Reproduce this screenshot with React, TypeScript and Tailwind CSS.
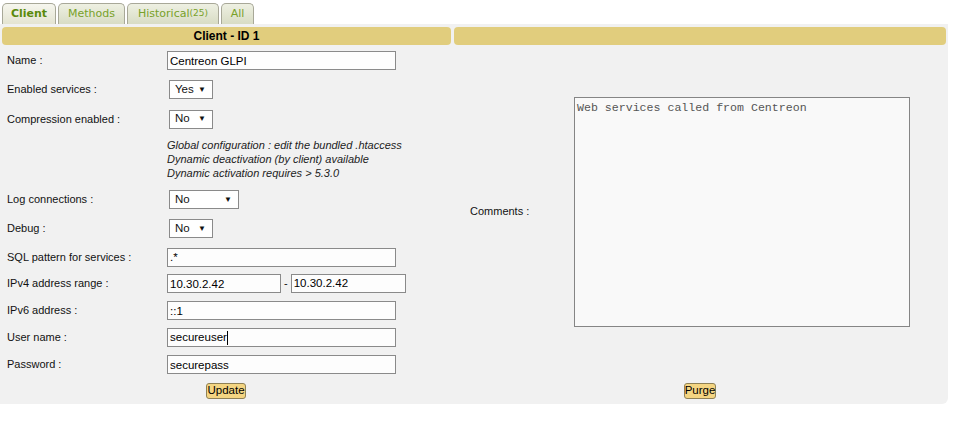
import React from 'react';

const tabs = [
    { label: 'Client', active: true, w: 'w-[54px]' },
    { label: 'Methods', active: false, w: 'w-[67px]' },
    { label: 'Historical', sup: '(25)', active: false, w: 'w-[92px]' },
    { label: 'All', active: false, w: 'w-[33px]' },
];

const inputCls =
    "h-[19px] border border-[#8a8a8a] bg-[#fdfdfd] pl-[2px] text-[11.5px] text-black font-['Liberation_Sans',Arial,sans-serif] outline-none";

const Select = ({ value, w }: { value: string; w: string }) => (
    <div className={`${w} ml-[2px] h-[19px] border border-[#8a8a8a] bg-white flex items-center justify-between pl-[5px] pr-[6px] text-[11.5px]`}>
        <span>{value}</span>
        <span className="text-[8px] leading-none">▼</span>
    </div>
);

const Row = ({ label, h, children }: { label: string; h: string; children?: React.ReactNode }) => (
    <div className={`flex items-center ${h}`}>
        <div className="w-[167px] pl-[7px]">{label}</div>
        {children}
    </div>
);

export default function App() {
    return (
        <div className="w-[962px] h-[421px] bg-white text-[11px] text-[#111] font-['Liberation_Sans',Arial,sans-serif]">
            {/* tabs */}
            <div className="flex gap-[2px] pl-[2px] pt-[3px] h-[24px]">
                {tabs.map((t) => (
                    <div
                        key={t.label}
                        className={`${t.w} h-[21px] flex items-center justify-center rounded-t-[5px] border border-b-0 border-[#a8a898] font-['DejaVu_Sans',Verdana,sans-serif] text-[11px] ${
                            t.active
                                ? 'bg-gradient-to-b from-[#f6f6ee] to-[#e4e4d2] text-[#5a8a0c] font-bold'
                                : 'bg-gradient-to-b from-[#eef0e2] to-[#d8dcc4] text-[#78a12a]'
                        }`}
                    >
                        {t.label}
                        {t.sup && <sup className="text-[9px] relative -top-[1px]">{t.sup}</sup>}
                    </div>
                ))}
            </div>

            {/* panel */}
            <div className="w-[948px] bg-[#f1f1f1] rounded-br-[6px]">
                <div className="flex gap-[3px] px-[2px] pt-[3px]">
                    <div className="w-[449px] h-[18px] rounded-[4px] bg-[#e1cd7d] flex items-center justify-center font-bold text-[12px] text-black">
                        Client - ID 1
                    </div>
                    <div className="w-[492px] h-[18px] rounded-[4px] bg-[#e1cd7d]" />
                </div>

                <div className="flex">
                    {/* left column */}
                    <div className="w-[452px] pt-[1px]">
                        <Row label="Name :" h="h-[29px]">
                            <input readOnly defaultValue="Centreon GLPI" className={`${inputCls} w-[229px]`} />
                        </Row>
                        <Row label="Enabled services :" h="h-[29px]">
                            <Select value="Yes" w="w-[44px]" />
                        </Row>
                        <Row label="Compression enabled :" h="h-[30px]">
                            <Select value="No" w="w-[44px]" />
                        </Row>
                        <div className="h-[52px] pt-[4px] pl-[167px] italic text-[#222] leading-[14px]">
                            <div>Global configuration : edit the bundled .htaccess</div>
                            <div>Dynamic deactivation (by client) available</div>
                            <div>Dynamic activation requires &gt; 5.3.0</div>
                        </div>
                        <Row label="Log connections :" h="h-[27px]">
                            <Select value="No" w="w-[70px]" />
                        </Row>
                        <Row label="Debug :" h="h-[31px]">
                            <Select value="No" w="w-[44px]" />
                        </Row>
                        <Row label="SQL pattern for services :" h="h-[26px]">
                            <input readOnly defaultValue=".*" className={`${inputCls} w-[229px]`} />
                        </Row>
                        <Row label="IPv4 address range :" h="h-[27px]">
                            <input readOnly defaultValue="10.30.2.42" className={`${inputCls} w-[114px]`} />
                            <span className="mx-[3px]">-</span>
                            <input readOnly defaultValue="10.30.2.42" className={`${inputCls} w-[115px] pb-[2px]`} />
                        </Row>
                        <Row label="IPv6 address :" h="h-[27px]">
                            <input readOnly defaultValue="::1" className={`${inputCls} w-[229px]`} />
                        </Row>
                        <Row label="User name :" h="h-[27px]">
                            <div className={`${inputCls} w-[229px] flex items-center`}>
                                secureuser
                                <span className="inline-block w-[1px] h-[14px] bg-black" />
                            </div>
                        </Row>
                        <Row label="Password :" h="h-[27px]">
                            <input readOnly defaultValue="securepass" className={`${inputCls} w-[229px]`} />
                        </Row>
                    </div>

                    {/* right column */}
                    <div className="flex-1 flex items-center">
                        <div className="w-[122px] pl-[18px]">Comments :</div>
                        <div className="w-[336px] h-[230px] border border-[#858585] bg-[#f9f9f9] px-[2px] pt-[3px] font-['Liberation_Mono','Courier_New',monospace] text-[11.6px] text-[#555] leading-[14px]">
                            Web services called from Centreon
                        </div>
                    </div>
                </div>

                {/* buttons */}
                <div className="flex h-[26px] items-start pt-[5px]">
                    <div className="w-[452px] flex justify-center">
                        <button className="h-[16px] px-0 border border-[#8f8155] rounded-[3px] bg-[#f4d582] text-black text-[11.5px] leading-none">
                            Update
                        </button>
                    </div>
                    <div className="flex-1 flex justify-center">
                        <button className="h-[16px] px-0 border border-[#8f8155] rounded-[3px] bg-[#f4d582] text-black text-[11.5px] leading-none">
                            Purge
                        </button>
                    </div>
                </div>
            </div>
        </div>
    );
}
